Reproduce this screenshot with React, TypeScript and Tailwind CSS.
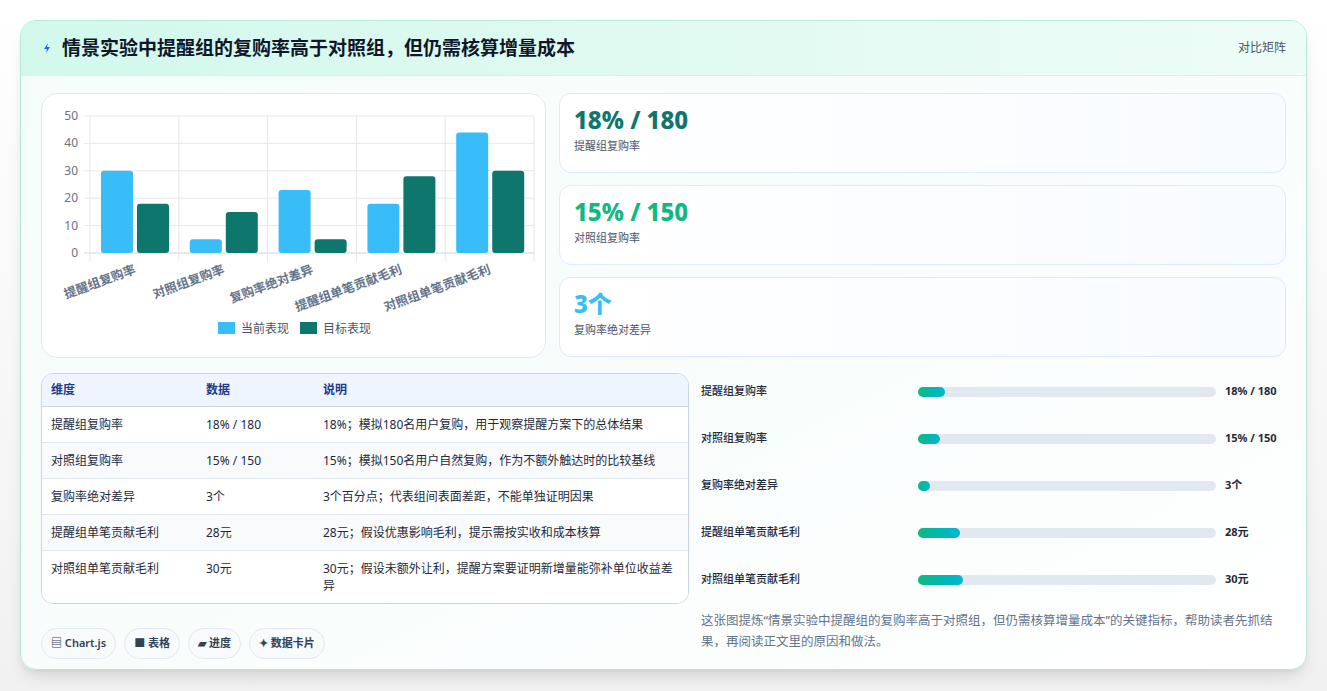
import React from 'react';

const font = { fontFamily: '"Noto Sans", "Noto Sans CJK SC", sans-serif' };

const cats = ['提醒组复购率', '对照组复购率', '复购率绝对差异', '提醒组单笔贡献毛利', '对照组单笔贡献毛利'];
const cur = [30, 5, 23, 18, 44];
const tgt = [18, 15, 5, 28, 30];

const rows = [
  { k: '提醒组复购率', v: '18% / 180', d: '18%；模拟180名用户复购，用于观察提醒方案下的总体结果', n: 18 },
  { k: '对照组复购率', v: '15% / 150', d: '15%；模拟150名用户自然复购，作为不额外触达时的比较基线', n: 15 },
  { k: '复购率绝对差异', v: '3个', d: '3个百分点；代表组间表面差距，不能单独证明因果', n: 3 },
  { k: '提醒组单笔贡献毛利', v: '28元', d: '28元；假设优惠影响毛利，提示需按实收和成本核算', n: 28 },
  { k: '对照组单笔贡献毛利', v: '30元', d: '30元；假设未额外让利，提醒方案要证明新增量能弥补单位收益差异', n: 30 },
];

function Chart() {
  const x0 = 48, x1 = 492, yTop = 22, yBot = 159;
  const sc = (yBot - yTop) / 50;
  const cw = (x1 - x0) / 5;
  return (
    <svg width="505" height="264" viewBox="0 0 505 264" style={font}>
      {[0, 10, 20, 30, 40, 50].map((t) => {
        const y = yBot - t * sc;
        return (
          <g key={t}>
            <line x1={x0 - 6} x2={x1} y1={y} y2={y} stroke={t === 0 ? '#cbd5e1' : '#e5e7eb'} />
            <text x={36} y={y + 4} fontSize="12" fill="#6b7280" textAnchor="end">{t}</text>
          </g>
        );
      })}
      {[0, 1, 2, 3, 4, 5].map((i) => (
        <line key={i} x1={x0 + i * cw} x2={x0 + i * cw} y1={yTop} y2={yBot + 8} stroke="#e5e7eb" />
      ))}
      {cats.map((c, i) => {
        const gx = x0 + i * cw;
        const ax = gx + cw / 2 + 2;
        return (
          <g key={c}>
            <rect x={gx + 11} y={yBot - cur[i] * sc} width={32} height={cur[i] * sc} rx={3} fill="#38bdf8" />
            <rect x={gx + 47} y={yBot - tgt[i] * sc} width={32} height={tgt[i] * sc} rx={3} fill="#0f766e" />
            <text x={ax} y={yBot + 20} fontSize="12.5" fontWeight="600" fill="#64748b" textAnchor="end" transform={`rotate(-20 ${ax} ${yBot + 20})`}>{c}</text>
          </g>
        );
      })}
      <rect x={176} y={228} width={17} height={12} fill="#38bdf8" />
      <text x={199} y={239} fontSize="12" fill="#475569">当前表现</text>
      <rect x={258} y={228} width={17} height={12} fill="#0f766e" />
      <text x={281} y={239} fontSize="12" fill="#475569">目标表现</text>
    </svg>
  );
}

function Stat({ v, l, c }: { v: string; l: string; c: string }) {
  return (
    <div className="h-[80px] rounded-xl border border-[#dbeafe] bg-gradient-to-r from-white to-[#f8fbff] px-[14px] pt-[10px]">
      <div className={`text-[24px] font-extrabold leading-[32px] ${c}`}>{v}</div>
      <div className="mt-[2px] text-[11px] text-[#475569]">{l}</div>
    </div>
  );
}

export default function App() {
  return (
    <div className="min-h-[691px] bg-gradient-to-b from-white to-[#f1f1f1] px-5 pt-5" style={font}>
      <div className="h-[650px] overflow-hidden rounded-2xl border border-[#b5eadb] bg-gradient-to-br from-[#f5fdfb] via-[#f8fdfc] to-white shadow-lg">
        <div className="flex h-[55px] items-center justify-between border-b border-[#d6f2ea] bg-gradient-to-r from-[#d2f8ec] to-[#eefcf7] px-5">
          <div className="flex items-center gap-[9px]">
            <svg width="12" height="12" viewBox="0 0 12 12"><path d="M7 1 3 7h3l-1 4 4-6H6z" fill="#2563eb" /></svg>
            <span className="text-[19px] font-bold text-[#0f172a]">情景实验中提醒组的复购率高于对照组，但仍需核算增量成本</span>
          </div>
          <span className="text-[12px] text-[#475569]">对比矩阵</span>
        </div>
        <div className="px-5 pt-[17px]">
          <div className="grid grid-cols-[505px_1fr] gap-[13px]">
            <div className="h-[265px] rounded-2xl border border-[#e2e8f0] bg-white">
              <Chart />
            </div>
            <div className="flex flex-col gap-[12px]">
              <Stat v="18% / 180" l="提醒组复购率" c="text-[#0f766e]" />
              <Stat v="15% / 150" l="对照组复购率" c="text-[#10b981]" />
              <Stat v="3个" l="复购率绝对差异" c="text-[#38bdf8]" />
            </div>
          </div>
          <div className="mt-[15px] grid grid-cols-[648px_1fr] gap-[12px]">
            <div>
              <div className="overflow-hidden rounded-xl border border-[#cbd5e1] bg-white text-[12px] text-[#1e293b]">
                <div className="grid h-[33px] grid-cols-[155px_117px_1fr] items-center border-b border-[#cbd5e1] bg-[#eef5ff] px-[9px] font-bold text-[#1e3a8a]">
                  <span>维度</span><span>数据</span><span>说明</span>
                </div>
                {rows.map((r, i) => (
                  <div key={r.k} className={`grid grid-cols-[155px_117px_1fr] border-b border-[#e2e8f0] py-[9px] pl-[9px] pr-[12px] leading-[17px] last:border-b-0 ${i % 2 ? 'bg-[#f8fafc]' : 'bg-white'}`}>
                    <span>{r.k}</span><span>{r.v}</span><span>{r.d}</span>
                  </div>
                ))}
              </div>
              <div className="mt-[24px] flex gap-[8px] text-[11px] font-semibold text-[#334155]">
                {['▤ Chart.js', '■ 表格', '▰ 进度', '✦ 数据卡片'].map((c) => (
                  <span key={c} className="rounded-full border border-[#e2e8f0] bg-[#f8fafc] px-[9px] py-[6px]">{c}</span>
                ))}
              </div>
            </div>
            <div className="pt-[10px]">
              <div className="flex flex-col gap-[30px]">
                {rows.map((r) => (
                  <div key={r.k} className="flex h-[17px] items-center text-[11px] font-medium text-[#1e293b]">
                    <span className="w-[217px]">{r.k}</span>
                    <div className="h-[10px] w-[298px] rounded-full bg-[#e2e8f0]">
                      <div className="h-[10px] rounded-full bg-gradient-to-r from-[#10b981] to-[#06b6d4]" style={{ width: `${Math.max(r.n / 2, 4)}%` }} />
                    </div>
                    <span className="ml-[9px] font-bold">{r.v}</span>
                  </div>
                ))}
              </div>
              <p className="mt-[22px] text-[12.5px] leading-[21px] text-[#64748b]">
                这张图提炼“情景实验中提醒组的复购率高于对照组，但仍需核算增量成本”的关键指标，帮助读者先抓结果，再阅读正文里的原因和做法。
              </p>
            </div>
          </div>
        </div>
      </div>
    </div>
  );
}
